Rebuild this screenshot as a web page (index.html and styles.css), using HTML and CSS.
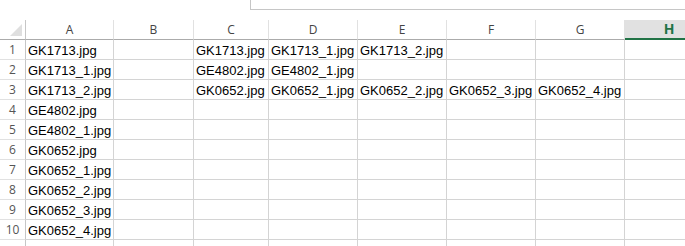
FILE: index.html
```html
<!DOCTYPE html>
<html lang="en">
<head>
  <meta charset="UTF-8">
  <title>Sheet1</title>
  <link rel="stylesheet" href="styles.css">
</head>
<body>
  <div class="topbar">
    <div class="formula-box"></div>
  </div>

  <div class="sheet" id="sheet"></div>

  <script>
    // column letters and cell data
    const cols = ['A', 'B', 'C', 'D', 'E', 'F', 'G', 'H'];
    const data = [
      ['GK1713.jpg', '', 'GK1713.jpg', 'GK1713_1.jpg', 'GK1713_2.jpg', '', '', ''],
      ['GK1713_1.jpg', '', 'GE4802.jpg', 'GE4802_1.jpg', '', '', '', ''],
      ['GK1713_2.jpg', '', 'GK0652.jpg', 'GK0652_1.jpg', 'GK0652_2.jpg', 'GK0652_3.jpg', 'GK0652_4.jpg', ''],
      ['GE4802.jpg', '', '', '', '', '', '', ''],
      ['GE4802_1.jpg', '', '', '', '', '', '', ''],
      ['GK0652.jpg', '', '', '', '', '', '', ''],
      ['GK0652_1.jpg', '', '', '', '', '', '', ''],
      ['GK0652_2.jpg', '', '', '', '', '', '', ''],
      ['GK0652_3.jpg', '', '', '', '', '', '', ''],
      ['GK0652_4.jpg', '', '', '', '', '', '', '']
    ];

    const sheet = document.getElementById('sheet');

    function cell(cls, text) {
      const el = document.createElement('div');
      el.className = cls;
      el.textContent = text;
      sheet.appendChild(el);
    }

    // header row
    cell('corner', '');
    cols.forEach(c => cell(c === 'H' ? 'col-head active' : 'col-head', c));

    // body rows
    data.forEach((row, i) => {
      cell('row-head', i + 1);
      row.forEach(v => cell('cell', v));
    });

    // next row, only its top edge shows
    cell('row-head', '');
    cols.forEach(() => cell('cell', ''));
  </script>
</body>
</html>
```

FILE: styles.css
```css
body {
  margin: 0;
  background: #fff;
  width: 685px;
  height: 246px;
  overflow: hidden;
}

.topbar {
  height: 20px;
  display: flex;
}

.formula-box {
  margin-left: 250px;
  flex: 1;
  height: 9px;
  border-left: 1px solid #c6c6c6;
  border-bottom: 1px solid #c6c6c6;
}

.sheet {
  display: grid;
  grid-template-columns: 26px 88px 80px 75px 89px 89px 89px 89px 89px;
  grid-auto-rows: 20px;
  height: 226px;
  overflow: hidden;
}

.corner {
  position: relative;
  border-right: 1px solid #c6c6c6;
  border-bottom: 1px solid #ababab;
}

.corner::after {
  content: '';
  position: absolute;
  right: 3px;
  bottom: 3px;
  width: 0;
  height: 0;
  border-left: 12px solid transparent;
  border-bottom: 12px solid #dfdfdf;
}

.col-head {
  font-family: 'Open Sans', sans-serif;
  font-size: 12px;
  color: #444;
  text-align: center;
  line-height: 19px;
  border-right: 1px solid #e1e1e1;
  border-bottom: 1px solid #ababab;
}

.col-head.active {
  background: #e1e1e1;
  color: #217346;
  font-weight: bold;
  font-size: 14px;
  line-height: 18px;
  border-bottom: 2px solid #217346;
}

.row-head {
  font-family: 'Open Sans', sans-serif;
  font-size: 12px;
  color: #555;
  text-align: center;
  line-height: 20px;
  overflow: hidden;
  border-right: 1px solid #c6c6c6;
  border-bottom: 1px solid #e1e1e1;
}

.cell {
  font-family: 'Liberation Sans', Arial, sans-serif;
  font-size: 13px;
  color: #000;
  line-height: 21px;
  padding-left: 2px;
  white-space: nowrap;
  overflow: hidden;
  border-right: 1px solid #d4d4d4;
  border-bottom: 1px solid #d4d4d4;
}
```
